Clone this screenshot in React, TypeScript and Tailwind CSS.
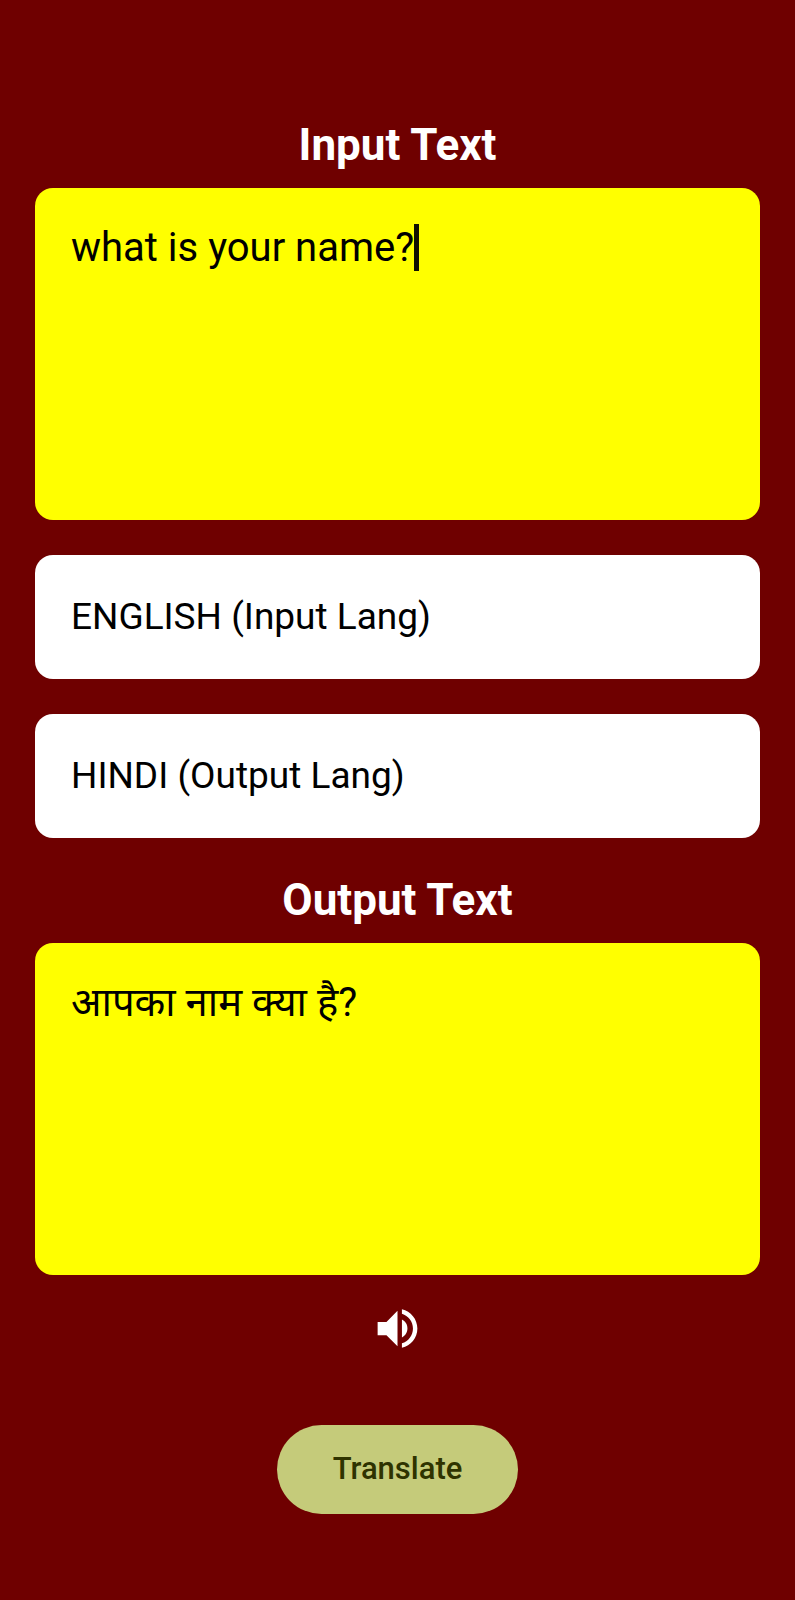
import { useState } from "react";

const fieldText =
  "block resize-none border-0 bg-transparent text-[40px] leading-[48px] text-black outline-none";

const fieldBox =
  "mt-[17px] flex h-[332px] w-full items-start rounded-[18px] bg-[#ffff00] px-9 pt-9";

const heading = "text-[44px] leading-[52px] font-bold text-white";

const selectBox =
  "block h-[124px] w-full appearance-none rounded-[18px] border-0 bg-white px-9 text-[37px] text-black outline-none";

function LanguageSelect({ label, value }: { label: string; value: string }) {
  return (
    <select aria-label={label} defaultValue={value} className={selectBox}>
      <option value={value}>{value}</option>
    </select>
  );
}

function VolumeIcon() {
  return (
    <svg viewBox="0 0 24 24" fill="currentColor" aria-hidden="true" className="size-[53px]">
      <path d="M3 9v6h4l5 5V4L7 9H3z" />
      <path d="M14 7.97v8.05c1.48-.73 2.5-2.25 2.5-4.02 0-1.77-1.02-3.29-2.5-4.03z" />
      <path d="M14 3.23v2.06c2.89.86 5 3.54 5 6.71s-2.11 5.85-5 6.71v2.06c4.01-.91 7-4.49 7-8.77s-2.99-7.86-7-8.77z" />
    </svg>
  );
}

export default function App() {
  const [text, setText] = useState("what is your name?");

  return (
    <main className="flex min-h-screen flex-col items-center bg-[#6f0000] px-[35px] pt-[119px] pb-[86px] font-['Roboto','Noto_Sans_Devanagari','Noto_Sans',sans-serif]">
      <label htmlFor="input-text" className={heading}>
        Input Text
      </label>
      <div className={fieldBox}>
        <textarea
          id="input-text"
          rows={1}
          value={text}
          onChange={(event) => setText(event.target.value)}
          className={`${fieldText} field-sizing-content max-w-full caret-transparent`}
        />
        <span aria-hidden="true" className="h-[47px] w-[5px] shrink-0 bg-[#111100]" />
      </div>

      <div className="mt-[35px] flex w-full flex-col gap-[35px]">
        <LanguageSelect label="Input Lang" value="ENGLISH (Input Lang)" />
        <LanguageSelect label="Output Lang" value="HINDI (Output Lang)" />
      </div>

      <label htmlFor="output-text" className={`mt-9 ${heading}`}>
        Output Text
      </label>
      <div className={fieldBox}>
        <textarea
          id="output-text"
          rows={1}
          readOnly
          lang="hi"
          value="आपका नाम क्या है?"
          className={`${fieldText} w-full`}
        />
      </div>

      <button
        type="button"
        aria-label="Speak"
        className="flex size-[106px] items-center justify-center rounded-full text-white"
      >
        <VolumeIcon />
      </button>

      <button
        type="submit"
        className="mt-11 h-[89px] rounded-full bg-[#c5cb7a] px-14 text-[31px] font-medium text-[#2f3300]"
      >
        Translate
      </button>
    </main>
  );
}
